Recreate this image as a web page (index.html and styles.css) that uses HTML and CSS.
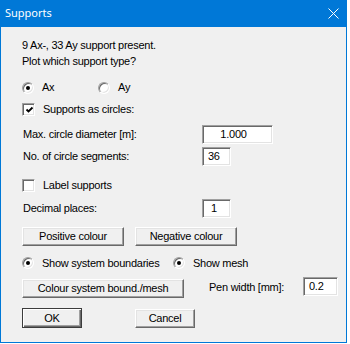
FILE: index.html
```html
<!DOCTYPE html>
<html>
<head>
<meta charset="utf-8">
<link rel="stylesheet" href="styles.css">
</head>
<body>
<div class="window">
  <div class="titlebar">
    <span class="title">Supports</span>
    <svg class="close" width="11" height="11" viewBox="0 0 11 11"><path d="M0.5 0.5 L10.5 10.5 M10.5 0.5 L0.5 10.5" stroke="#fff" stroke-width="1" fill="none"/></svg>
  </div>
  <div class="body">
    <div class="line">9 Ax-, 33 Ay support present.</div>
    <div class="line line-2">Plot which support type?</div>
    <div class="row row-type">
      <span class="opt opt-ax"><span class="radio on"></span>Ax</span>
      <span class="opt"><span class="radio"></span>Ay</span>
    </div>
    <div class="row row-circles">
      <span class="opt"><span class="check on"><svg width="9" height="9" viewBox="0 0 9 9"><path d="M1.5 3.5 L3.5 5.5 L7.5 1.5" stroke="#000" stroke-width="1.8" fill="none"/></svg></span>Supports as circles:</span>
    </div>
    <div class="field row-diam">
      <span class="label">Max. circle diameter [m]:</span>
      <span class="edit edit-wide">1.000</span>
    </div>
    <div class="field row-seg">
      <span class="label">No. of circle segments:</span>
      <span class="edit edit-small">36</span>
    </div>
    <div class="row row-label">
      <span class="opt"><span class="check"></span>Label supports</span>
    </div>
    <div class="field row-dec">
      <span class="label">Decimal places:</span>
      <span class="edit edit-small edit-one">1</span>
    </div>
    <div class="row row-colours">
      <span class="btn btn-colour">Positive colour</span>
      <span class="btn btn-colour">Negative colour</span>
    </div>
    <div class="row row-show">
      <span class="opt opt-bound"><span class="radio on"></span>Show system boundaries</span>
      <span class="opt"><span class="radio on"></span>Show mesh</span>
    </div>
    <div class="row row-pen">
      <span class="btn btn-mesh">Colour system bound./mesh</span>
      <span class="pen-label">Pen width [mm]:</span>
      <span class="edit edit-pen">0.2</span>
    </div>
    <div class="row row-ok">
      <span class="btn btn-ok">OK</span>
      <span class="btn btn-cancel">Cancel</span>
    </div>
  </div>
</div>
</body>
</html>
```
FILE: styles.css
```css
html, body {
  margin: 0;
  padding: 0;
  background: #ffffff;
}

.window {
  width: 347px;
  height: 343px;
  box-sizing: border-box;
  border: 1px solid #0078d7;
  border-top: 0;
  background: #f0f0f0;
  font-family: "Liberation Sans", Arial, sans-serif;
  font-size: 11px;
  letter-spacing: -0.25px;
  color: #000;
  display: flex;
  flex-direction: column;
}

.titlebar {
  height: 27px;
  background: #0078d7;
  display: flex;
  align-items: flex-start;
  flex: none;
}

.title {
  font-family: "Noto Sans", "Open Sans", sans-serif;
  font-size: 11px;
  letter-spacing: 0;
  line-height: 15px;
  color: #fff;
  margin-top: 5px;
  margin-left: 4px;
}

.close {
  margin-left: auto;
  margin-right: 7px;
  margin-top: 8px;
  display: block;
}

.body {
  padding: 12px 0 0 21px;
  display: flex;
  flex-direction: column;
}

.line {
  height: 13px;
  line-height: 13px;
  white-space: nowrap;
}

.line-2 {
  margin-top: 3px;
}

.row {
  display: flex;
  align-items: center;
  white-space: nowrap;
}

.opt {
  display: flex;
  align-items: center;
  height: 13px;
  line-height: 13px;
}

.radio {
  width: 12px;
  height: 12px;
  box-sizing: border-box;
  border-radius: 50%;
  border: 1px solid;
  border-color: #a0a0a0 #ffffff #ffffff #a0a0a0;
  box-shadow: inset 1px 1px 0 #696969, inset -1px -1px 0 #e3e3e3;
  background: #fff;
  margin-right: 8px;
  position: relative;
  flex: none;
}

.radio.on::after {
  content: "";
  position: absolute;
  left: 3px;
  top: 3px;
  width: 4px;
  height: 4px;
  border-radius: 50%;
  background: #000;
}

.check {
  width: 13px;
  height: 13px;
  box-sizing: border-box;
  border: 1px solid;
  border-color: #a0a0a0 #ffffff #ffffff #a0a0a0;
  box-shadow: inset 1px 1px 0 #696969, inset -1px -1px 0 #e3e3e3;
  background: #fff;
  margin-right: 8px;
  display: flex;
  align-items: center;
  justify-content: center;
  flex: none;
}

.check svg {
  display: block;
  margin-left: 1px;
  margin-top: 1px;
}

.row-type {
  margin-top: 13px;
  height: 13px;
}

.opt-ax {
  width: 76px;
}

.row-circles {
  margin-top: 9px;
  height: 13px;
}

.field {
  display: grid;
  grid-template-columns: 180px auto;
  align-items: center;
  height: 19px;
  white-space: nowrap;
}

.label {
  line-height: 13px;
  padding-left: 1px;
}

.edit {
  height: 19px;
  box-sizing: border-box;
  border: 1px solid;
  border-color: #a0a0a0 #ffffff #ffffff #a0a0a0;
  box-shadow: inset 1px 1px 0 #696969, inset -1px -1px 0 #e3e3e3;
  background: #fff;
  line-height: 17px;
  padding-left: 5px;
  display: block;
}

.edit-wide {
  width: 71px;
  text-align: center;
  padding-left: 0;
  padding-right: 8px;
}

.edit-small {
  width: 29px;
}

.edit-one {
  padding-left: 8px;
}

.row-diam {
  margin-top: 9px;
}

.row-seg {
  margin-top: 3px;
}

.row-label {
  margin-top: 13px;
  height: 13px;
}

.row-dec {
  margin-top: 7px;
}

.btn {
  height: 19px;
  box-sizing: border-box;
  border: 1px solid;
  border-color: #ffffff #696969 #696969 #ffffff;
  box-shadow: inset -1px -1px 0 #a0a0a0, inset 1px 1px 0 #e3e3e3;
  background: #f0f0f0;
  display: flex;
  align-items: center;
  justify-content: center;
  line-height: 13px;
  flex: none;
}

.row-colours {
  margin-top: 9px;
  gap: 11px;
  height: 19px;
}

.btn-colour {
  width: 102px;
}

.row-show {
  margin-top: 11px;
  height: 12px;
}

.opt-bound {
  width: 151px;
}

.row-pen {
  margin-top: 10px;
  height: 19px;
  align-items: flex-start;
}

.btn-mesh {
  width: 162px;
}

.pen-label {
  width: 94px;
  margin-left: 25px;
  line-height: 13px;
  margin-top: 2px;
}

.edit-pen {
  width: 35px;
  margin-top: -2px;
}

.row-ok {
  margin-top: 10px;
  height: 20px;
  gap: 53px;
}

.btn-ok {
  width: 60px;
  height: 20px;
  border: 1px solid #3c3c3c;
  box-shadow: inset 1px 1px 0 #ffffff, inset -1px -1px 0 #696969, inset -2px -2px 0 #a0a0a0;
}

.btn-cancel {
  width: 60px;
  height: 19px;
}
```
